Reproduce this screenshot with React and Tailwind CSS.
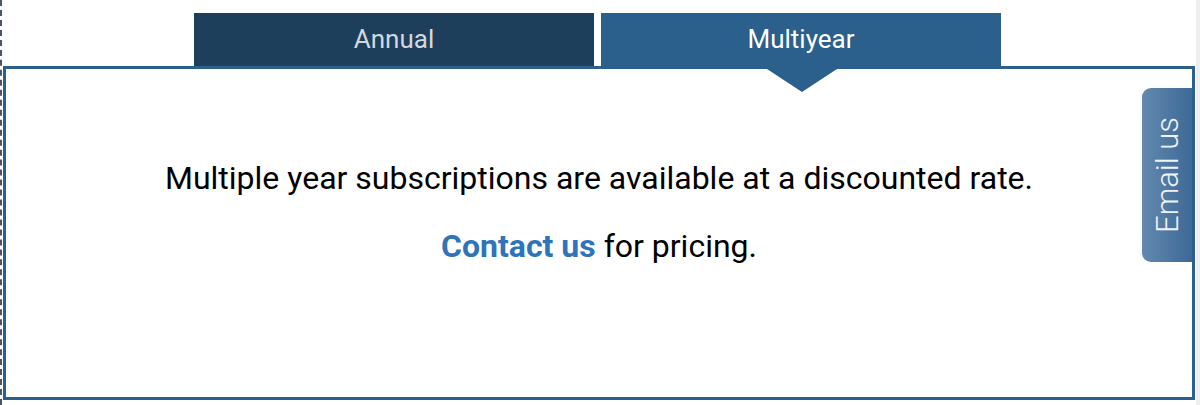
import React, { useState } from 'react';

const tabs = ['Annual', 'Multiyear'];

const App = () => {
  const [active, setActive] = useState('Multiyear');

  return (
    <div className="relative w-[1200px] h-[405px] bg-white overflow-hidden font-['Roboto',sans-serif]">
      {/* page edge + scrollbar strip */}
      <div className="absolute left-0 top-0 h-full w-[2px] border-l-2 border-dashed border-gray-600" />
      <div className="absolute right-0 top-0 h-full w-[4px] bg-[#eeeeee]" />

      <div className="pt-[13px] pl-[3px] pr-[5px]">
        {/* Tabs */}
        <div className="flex gap-[7px] ml-[191px]">
          {tabs.map((tab) => (
            <button
              key={tab}
              onClick={() => setActive(tab)}
              className={`w-[400px] h-[53px] flex items-center justify-center text-[26px] leading-none pb-[1px] ${
                active === tab ? 'bg-[#2b5f8c] text-white' : 'bg-[#1e3f5c] text-[#d3d8de]'
              }`}
            >
              {tab}
            </button>
          ))}
        </div>

        {/* Panel */}
        <div className="relative h-[334px] border-[3px] border-[#2b5f8c]">
          <svg
            className="absolute top-0 left-[761px]"
            width="70"
            height="23"
            viewBox="0 0 70 23"
          >
            <polygon points="0,0 70,0 35,23" fill="#2b5f8c" />
          </svg>

          <div className="flex flex-col items-center pt-[90px] text-black text-[32px] leading-[38px]">
            <p>Multiple year subscriptions are available at a discounted rate.</p>
            <p className="mt-[30px]">
              <a href="#" className="font-bold text-[#2f73bb]">Contact us</a> for pricing.
            </p>
          </div>

          {/* Email us side tab */}
          <button className="absolute right-0 top-[19px] w-[50px] h-[174px] rounded-l-[9px] bg-linear-to-r from-[#6389ae] to-[#3c6997] flex items-center justify-center">
            <span className="[writing-mode:vertical-rl] rotate-180 text-[31px] font-light text-[#eef2f6] leading-none">
              Email us
            </span>
          </button>
        </div>
      </div>
    </div>
  );
};

export default App;
